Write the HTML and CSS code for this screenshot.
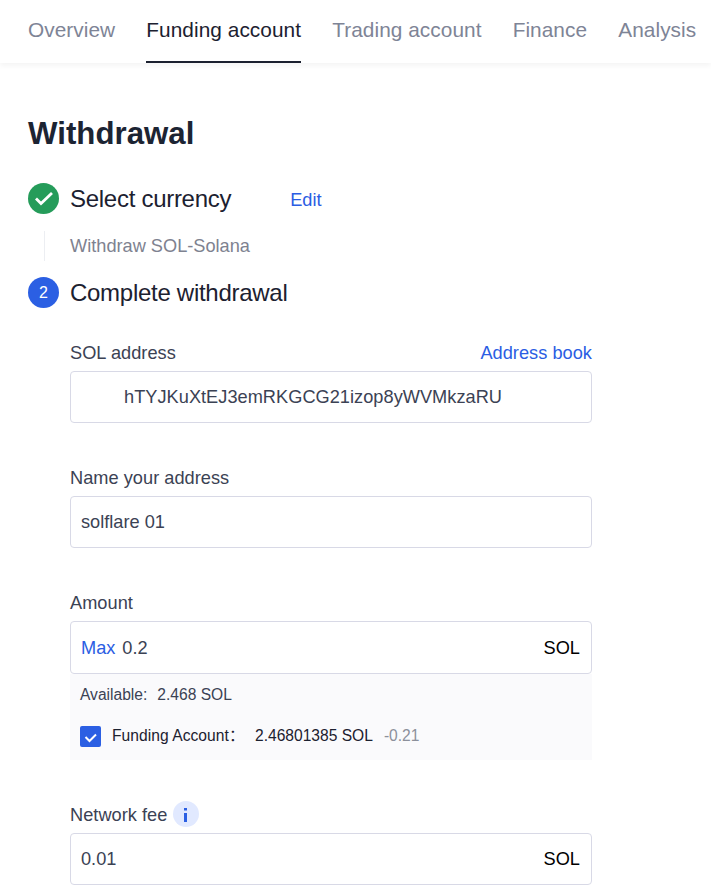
FILE: index.html
```html
<!DOCTYPE html>
<html lang="en"><head><meta charset="utf-8"><title>Withdrawal</title><link rel="stylesheet" href="styles.css"></head>
<body>
<nav class="tabs"><a>Overview</a><a class="active">Funding account</a><a>Trading account</a><a>Finance</a><a>Analysis</a></nav>
<main>
<h1>Withdrawal</h1>
<section class="step first"><span class="badge done"><svg width="31" height="31" viewBox="0 0 31 31"><path d="M8 15.5l5 5L24 10"/></svg></span><h2>Select currency</h2><a class="edit">Edit</a></section>
<p class="summary">Withdraw SOL-Solana</p>
<section class="step"><span class="badge">2</span><h2>Complete withdrawal</h2></section>
<form>
<div class="field"><div class="label"><span>SOL address</span><a>Address book</a></div><div class="input address">hTYJKuXtEJ3emRKGCG21izop8yWVMkzaRU</div></div>
<div class="field"><div class="label"><span>Name your address</span></div><div class="input">solflare 01</div></div>
<div class="field amount"><div class="label"><span>Amount</span></div><div class="input"><a>Max</a><span>0.2</span><b>SOL</b></div>
<div class="balance"><div class="available"><span>Available:</span><span>2.468 SOL</span></div><div class="funding"><span class="check"><svg width="21" height="21" viewBox="0 0 21 21"><path d="M5.5 11l4 4 6.5-6.5"/></svg></span><span class="name">Funding Account：</span><span class="value">2.46801385 SOL</span><span class="minus">-0.21</span></div></div></div>
<div class="field"><div class="label"><span>Network fee</span><i class="info"><svg width="26" height="26" viewBox="0 0 26 26"><path d="M11 7h3v2.5h-3zM11 12h3v9h-3z"/></svg></i></div><div class="input"><span>0.01</span><b>SOL</b></div></div>
</form>
</main></body></html>
```
FILE: styles.css
```css
*{box-sizing:border-box}
body{margin:0;height:893px;overflow:hidden;background:#fff;color:#3b4254;font:18.2px/24px "Liberation Sans","Noto Sans CJK SC",Arial,sans-serif}
a{color:#2b5de3}
.tabs{display:flex;height:63px;padding-left:28px;gap:31.2px;box-shadow:0 3px 5px #0000000b;white-space:nowrap;font-size:20.8px;line-height:60px;letter-spacing:.06px}
.tabs a{color:#7e8496}
.tabs .active{color:#1c2130;border-bottom:2px solid #1c2130}
main{padding:51px 0 0 28px}
h1{margin:0;font-size:31.2px;line-height:40px;letter-spacing:.04px;color:#1c2433}
.step{display:flex;align-items:center;height:31px}
.first{margin-top:29px}
.badge{width:31px;height:31px;border-radius:50%;background:#2b5fe3;color:#fff;font-size:16px;line-height:31px;text-align:center;margin-right:11px}
.done{background:#259c5a}
svg{display:block}
.badge path,.check path{fill:none;stroke:#fff;stroke-width:2.8}
.check path{stroke-width:2}
h2{margin:0;font-size:24px;font-weight:400;line-height:30px;letter-spacing:-.28px;color:#1c2130}
.edit{margin:3px 0 0 59px}
.summary{margin:17px 0 16px 16px;padding-left:25px;border-left:1px solid #eceef2;height:30px;line-height:31px;color:#7e8290}
form{width:522px;margin:32px 0 0 42px}
.field{height:125px}
.label{display:flex;justify-content:space-between;height:24px;margin-bottom:7px;letter-spacing:.03px}
.label span,.label a{padding-top:1px}
.input{display:flex;align-items:center;height:52px;padding:0 11px 0 10px;border:1px solid #d8d9e6;border-radius:4px}
.address{padding-left:53px;letter-spacing:.03px}
.input b{margin-left:auto;font-weight:400;color:#000}
.input a{margin-right:7px}
.amount{height:212px}
.amount .input{height:53px}
.balance{height:86px;background:#fafafc;padding:9px 10px;font-size:15.6px}
.available{display:flex;gap:10px}
.funding{display:flex;align-items:center;margin-top:17px;color:#1c2130}
.check{width:21px;height:21px;background:#2b5fe3;border-radius:2px;margin-right:11px}
.name{width:143px;letter-spacing:.05px}
.minus{margin-left:11px;color:#8c909b}
.info{width:26px;height:26px;border-radius:50%;background:#e1e9ff;margin:-1px auto 0 6px}
.info path{fill:#2b5fe3}
```
